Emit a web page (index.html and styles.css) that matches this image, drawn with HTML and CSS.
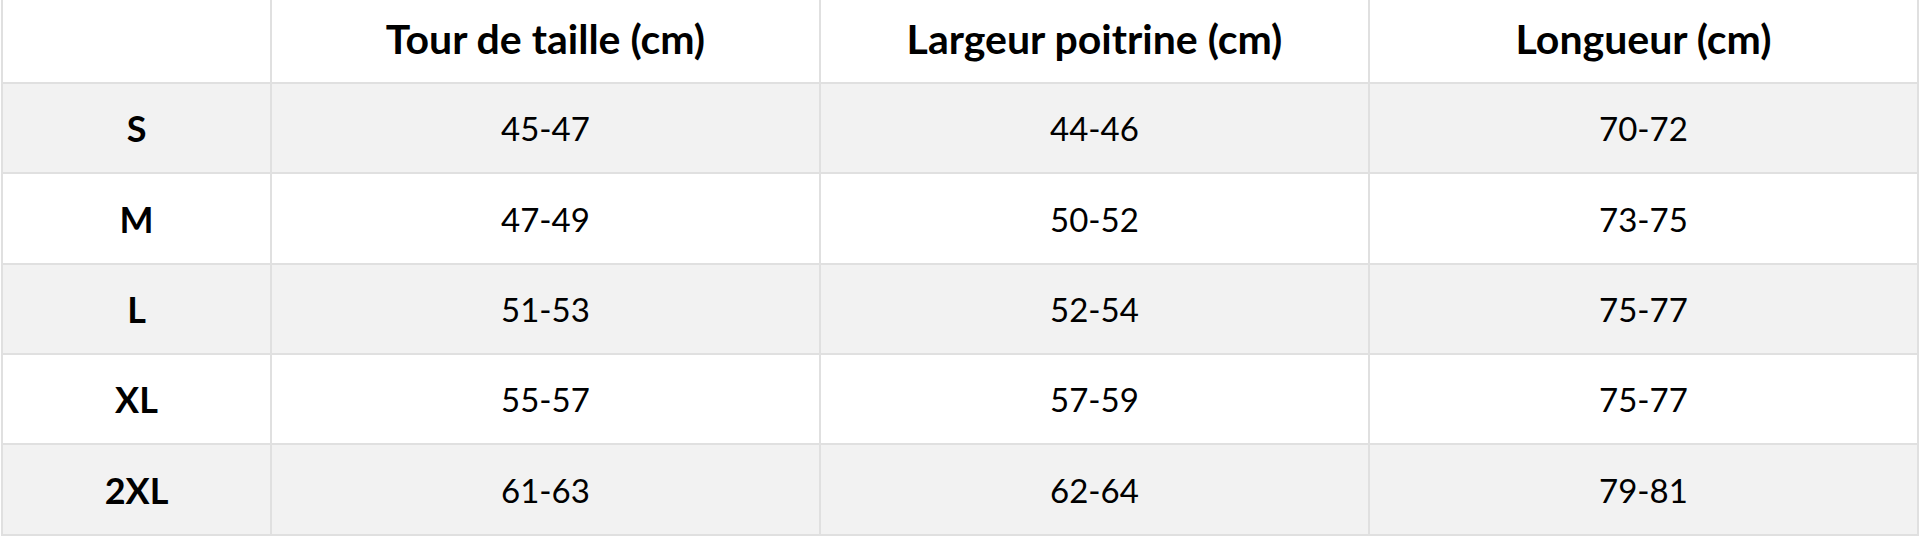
FILE: index.html
```html
<!DOCTYPE html>
<html lang="fr">
<head>
<meta charset="utf-8">
<title>Guide des tailles</title>
<link rel="stylesheet" href="styles.css">
</head>
<body>
<div class="size-table">
  <div class="cell head corner"></div>
  <div class="cell head">Tour de taille (cm)</div>
  <div class="cell head">Largeur poitrine (cm)</div>
  <div class="cell head">Longueur (cm)</div>

  <div class="cell label shade">S</div>
  <div class="cell shade">45-47</div>
  <div class="cell shade">44-46</div>
  <div class="cell shade">70-72</div>

  <div class="cell label">M</div>
  <div class="cell">47-49</div>
  <div class="cell">50-52</div>
  <div class="cell">73-75</div>

  <div class="cell label shade">L</div>
  <div class="cell shade">51-53</div>
  <div class="cell shade">52-54</div>
  <div class="cell shade">75-77</div>

  <div class="cell label">XL</div>
  <div class="cell">55-57</div>
  <div class="cell">57-59</div>
  <div class="cell">75-77</div>

  <div class="cell label shade">2XL</div>
  <div class="cell shade">61-63</div>
  <div class="cell shade">62-64</div>
  <div class="cell shade">79-81</div>
</div>
</body>
</html>
```
FILE: styles.css
```css
html, body {
  margin: 0;
  padding: 0;
  background: #ffffff;
}

body {
  font-family: Lato, "Open Sans", "Liberation Sans", sans-serif;
  color: #000000;
}

.size-table {
  margin-left: 1px;
  width: 1918px;
  border-left: 2px solid #e0e0e0;
  box-sizing: border-box;
  display: grid;
  grid-template-columns: 269px 549px 549px 549px;
  grid-template-rows: 84px 90px 91px 90px 90px 91px;
}

.cell {
  box-sizing: border-box;
  border-right: 2px solid #e0e0e0;
  border-bottom: 2px solid #e0e0e0;
  display: flex;
  align-items: center;
  justify-content: center;
  font-size: 33px;
  font-weight: 400;
}

.cell.head {
  font-size: 41px;
  font-weight: 700;
  padding-bottom: 6px;
}

.cell.label {
  font-size: 36px;
  font-weight: 700;
}

.cell.shade {
  background: #f2f2f2;
}
```
